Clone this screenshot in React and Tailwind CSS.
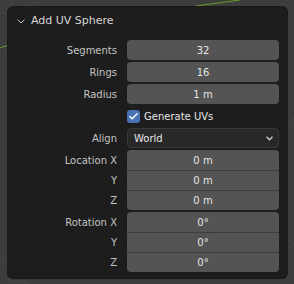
import { Check } from 'lucide-react'

const font = { fontFamily: '"DejaVu Sans", "Liberation Sans", sans-serif' }

// single numeric field row
function Field({ label, value }) {
  return (
    <div className="flex items-center">
      <div className="w-[109px] text-right text-[10px] text-[#c4c4c4]">{label}</div>
      <div className="ml-[10px] w-[152px] h-[20px] rounded-[4px] bg-[#545454] flex items-center justify-center text-[10px] text-[#e6e6e6]">
        {value}
      </div>
    </div>
  )
}

// stacked fields sharing one rounded box (Location / Rotation)
function FieldGroup({ rows }) {
  return (
    <div className="flex flex-col">
      {rows.map((r, i) => (
        <div key={i} className="flex items-center">
          <div className="w-[109px] text-right text-[10px] text-[#c4c4c4]">{r.label}</div>
          <div
            className={`ml-[10px] w-[152px] h-[20px] bg-[#545454] flex items-center justify-center text-[10px] text-[#e6e6e6]
              ${i === 0 ? 'rounded-t-[4px]' : 'border-t border-[#3d3d3d]'}
              ${i === rows.length - 1 ? 'rounded-b-[4px]' : ''}`}
          >
            {r.value}
          </div>
        </div>
      ))}
    </div>
  )
}

export default function App() {
  return (
    <div className="relative w-[294px] h-[284px] bg-[#3d3d3d] overflow-hidden" style={font}>
      {/* viewport grid lines */}
      <svg className="absolute inset-0" width="294" height="284">
        <line x1="0" y1="14" x2="40" y2="2" stroke="#474747" strokeWidth="1" />
        <line x1="12" y1="0" x2="10" y2="284" stroke="#474747" strokeWidth="1" />
        <line x1="0" y1="48" x2="12" y2="44" stroke="#6a9a2a" strokeWidth="1" />
        <line x1="196" y1="6" x2="240" y2="0" stroke="#6a9a2a" strokeWidth="1" />
        <line x1="246" y1="0" x2="294" y2="-8" stroke="#474747" strokeWidth="1" />
        <line x1="288" y1="130" x2="294" y2="118" stroke="#474747" strokeWidth="1" />
        <line x1="30" y1="284" x2="10" y2="280" stroke="#474747" strokeWidth="1" />
        <line x1="288" y1="248" x2="294" y2="244" stroke="#474747" strokeWidth="1" />
        <line x1="0" y1="262" x2="8" y2="258" stroke="#474747" strokeWidth="1" />
      </svg>

      <div className="absolute left-[8px] top-[7px] w-[279px] h-[271px] rounded-[5px] bg-[#1d1d1d] shadow-[0_0_0_1px_#191919]">
        <div className="flex items-center h-[27px] pl-[9px] pt-[1px] text-[11px] text-[#d6d6d6]">
          <svg width="8" height="5" viewBox="0 0 8 5" className="mr-[6px]">
            <polyline points="0.5,0.5 4,4 7.5,0.5" fill="none" stroke="#bdbdbd" strokeWidth="1" />
          </svg>
          Add UV Sphere
        </div>

        <div className="flex flex-col gap-[2px] mt-[6px]">
          <Field label="Segments" value="32" />
          <Field label="Rings" value="16" />
          <Field label="Radius" value="1 m" />

          <div className="flex items-center h-[20px]">
            <div className="w-[119px]" />
            <div className="w-[13px] h-[13px] rounded-[3px] bg-[#4772b3] flex items-center justify-center">
              <Check size={11} strokeWidth={3} className="text-white" />
            </div>
            <span className="ml-[4px] text-[10px] text-[#e6e6e6]">Generate UVs</span>
          </div>

          <div className="flex items-center">
            <div className="w-[109px] text-right text-[10px] text-[#c4c4c4]">Align</div>
            <div className="ml-[10px] w-[152px] h-[20px] rounded-[4px] bg-[#282828] border border-[#3a3a3a] flex items-center justify-between pl-[6px] pr-[5px] text-[10px] text-[#e6e6e6]">
              World
              <svg width="7" height="5" viewBox="0 0 7 5">
                <polyline points="0.5,0.8 3.5,3.8 6.5,0.8" fill="none" stroke="#d0d0d0" strokeWidth="1.3" />
              </svg>
            </div>
          </div>

          <FieldGroup
            rows={[
              { label: 'Location X', value: '0 m' },
              { label: 'Y', value: '0 m' },
              { label: 'Z', value: '0 m' },
            ]}
          />
          <FieldGroup
            rows={[
              { label: 'Rotation X', value: '0°' },
              { label: 'Y', value: '0°' },
              { label: 'Z', value: '0°' },
            ]}
          />
        </div>
      </div>
    </div>
  )
}
